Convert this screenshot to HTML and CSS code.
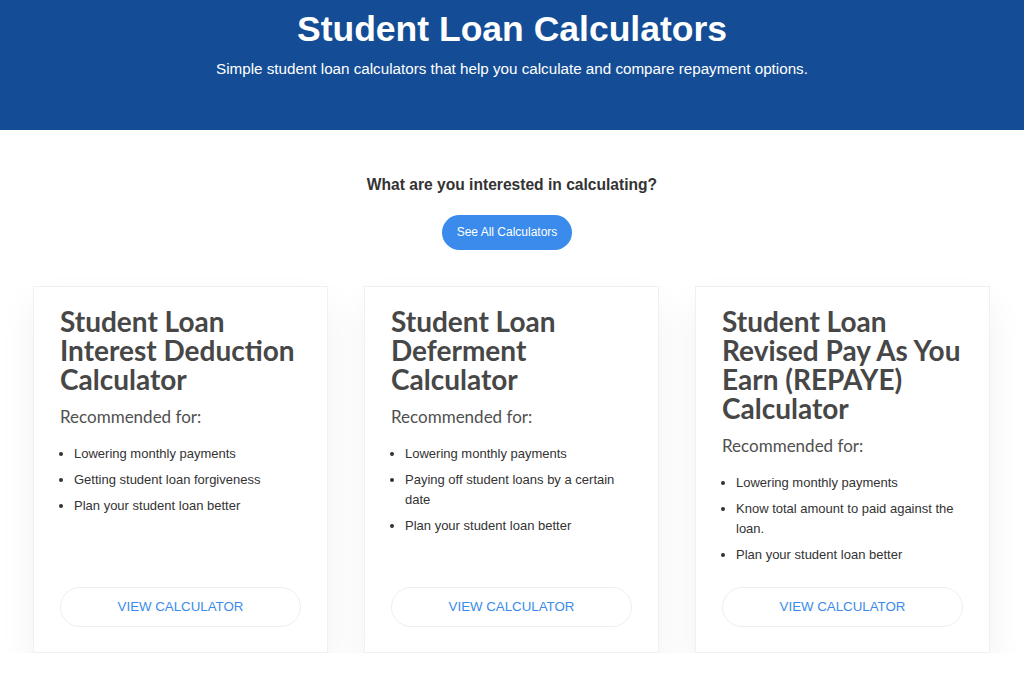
FILE: index.html
```html
<!DOCTYPE html>
<html lang="en">
<head>
    <meta charset="UTF-8">
    <meta name="viewport" content="width=device-width, initial-scale=1.0">
    <title>Student Loan Calculators</title>
    <link rel="stylesheet" href="styles.css">
</head>
<body>
    <header class="hero">
        <h1>Student Loan Calculators</h1>
        <p>Simple student loan calculators that help you calculate and compare repayment options.</p>
    </header>

    <main class="content">
        <h2 class="question">What are you interested in calculating?</h2>
        <a href="#" class="btn-all">See All Calculators</a>

        <div class="cards">
            <div class="card">
                <h3>Student Loan Interest Deduction Calculator</h3>
                <p class="rec">Recommended for:</p>
                <ul>
                    <li>Lowering monthly payments</li>
                    <li>Getting student loan forgiveness</li>
                    <li>Plan your student loan better</li>
                </ul>
                <a href="#" class="btn-view">VIEW CALCULATOR</a>
            </div>

            <div class="card">
                <h3>Student Loan Deferment Calculator</h3>
                <p class="rec">Recommended for:</p>
                <ul>
                    <li>Lowering monthly payments</li>
                    <li>Paying off student loans by a certain date</li>
                    <li>Plan your student loan better</li>
                </ul>
                <a href="#" class="btn-view">VIEW CALCULATOR</a>
            </div>

            <div class="card">
                <h3>Student Loan Revised Pay As You Earn (REPAYE) Calculator</h3>
                <p class="rec">Recommended for:</p>
                <ul>
                    <li>Lowering monthly payments</li>
                    <li>Know total amount to paid against the loan.</li>
                    <li>Plan your student loan better</li>
                </ul>
                <a href="#" class="btn-view">VIEW CALCULATOR</a>
            </div>
        </div>
    </main>
</body>
</html>
```

FILE: styles.css
```css
body {
    font-family: "Liberation Sans", Arial, sans-serif;
    background-color: #fff;
    color: #333;
    margin: 0;
    padding: 0;
}

.hero {
    background-color: #144d96;
    color: white;
    text-align: center;
    height: 130px;
    box-sizing: border-box;
    padding-top: 8px;
}

.hero h1 {
    font-size: 35.5px;
    font-weight: bold;
    margin: 0;
    line-height: 42px;
}

.hero p {
    font-size: 15.2px;
    margin: 10px 0 0;
}

.content {
    display: flex;
    flex-direction: column;
    align-items: center;
    padding-top: 46px;
}

.question {
    font-size: 15.6px;
    font-weight: bold;
    color: #333;
    margin: 0;
    line-height: 18px;
}

.btn-all {
    display: inline-block;
    margin-top: 21px;
    margin-right: 10px;
    width: 130px;
    height: 35px;
    line-height: 35px;
    text-align: center;
    background-color: #3a8beb;
    color: white;
    font-size: 12px;
    text-decoration: none;
    border-radius: 18px;
}

.cards {
    display: flex;
    gap: 36px;
    margin-top: 36px;
    margin-right: 1px;
}

.card {
    width: 295px;
    min-height: 367px;
    box-sizing: border-box;
    background-color: white;
    border: 1px solid #f0f0f0;
    box-shadow: 0 18px 36px rgba(0, 0, 0, 0.06);
    padding: 20px 26px 25px;
    display: flex;
    flex-direction: column;
}

.card h3 {
    font-family: Lato, "Liberation Sans", sans-serif;
    font-size: 28px;
    font-weight: bold;
    line-height: 29px;
    color: #474747;
    margin: 0;
}

.rec {
    font-family: Lato, "Liberation Sans", sans-serif;
    font-size: 17px;
    color: #505050;
    margin: 12px 0 0;
}

.card ul {
    margin: 17px 0 0;
    padding-left: 14px;
    font-size: 13px;
    color: #333;
}

.card li {
    line-height: 20px;
    margin-bottom: 6px;
}

.btn-view {
    margin-top: auto;
    display: block;
    height: 38px;
    line-height: 38px;
    border: 1px solid #eeeeee;
    border-radius: 20px;
    text-align: center;
    color: #3a8beb;
    font-size: 13.3px;
    text-decoration: none;
}
```
